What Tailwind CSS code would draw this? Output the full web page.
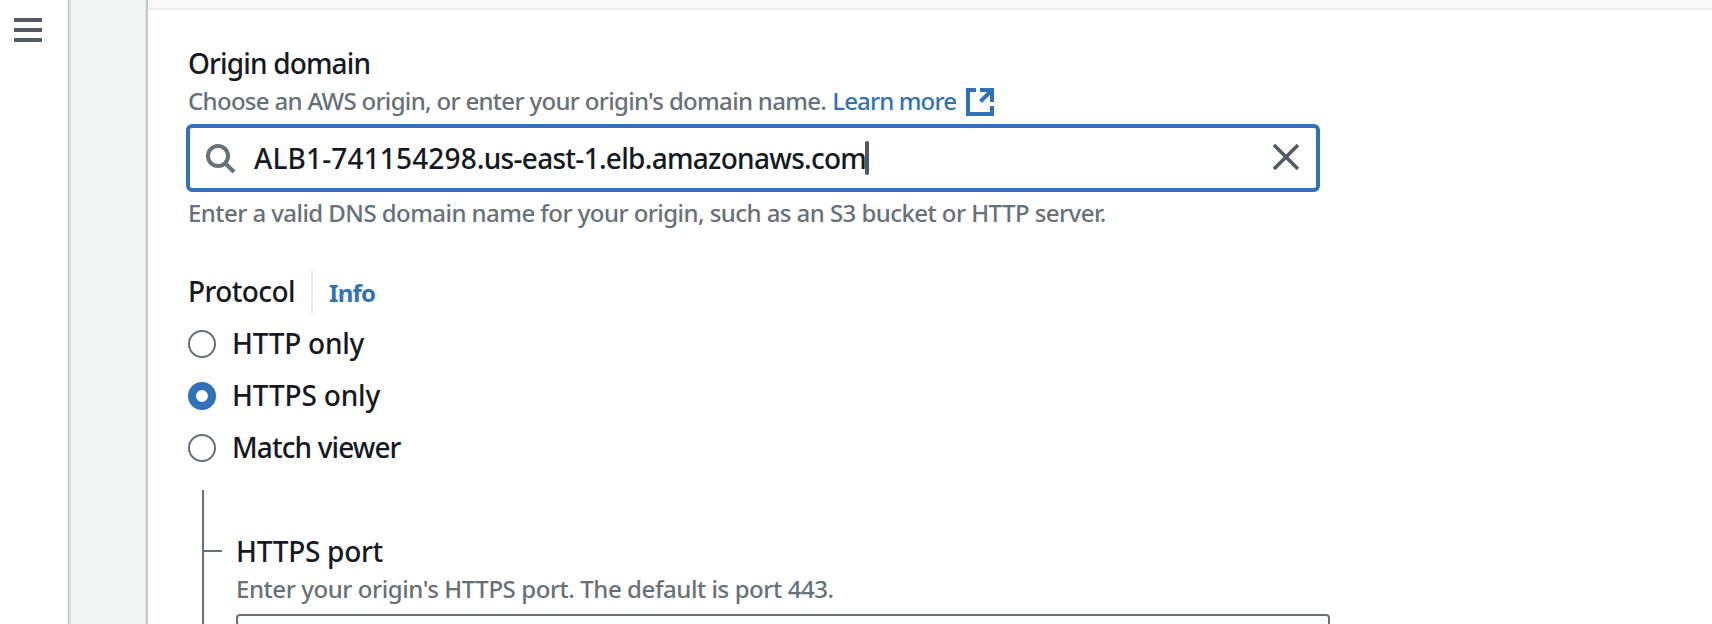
<!DOCTYPE html>
<html lang="en">
<head>
<meta charset="utf-8">
<title>Create origin</title>
<script src="https://cdn.jsdelivr.net/npm/@tailwindcss/browser@4"></script>
</head>
<body class="flex h-[624px] w-[1712px] overflow-hidden bg-white font-['Noto_Sans',sans-serif] font-medium text-[#16191f]">
  <aside class="w-[68px] shrink-0 pt-[18px] pl-[14px]">
    <button class="flex w-7 flex-col gap-1.5" aria-label="Open navigation">
      <span class="h-1 w-7 bg-[#545b64]"></span>
      <span class="h-1 w-7 bg-[#545b64]"></span>
      <span class="h-1 w-7 bg-[#545b64]"></span>
    </button>
  </aside>
  <div class="w-[78px] shrink-0 border-l border-[#b9bdbf] bg-[#f2f4f4]"><div class="h-full border-r border-l-2 border-r-[#e6e9e9] border-l-[#dadddd]"></div></div>
  <main class="flex-1 border-l-2 border-[#c3c8c9]">
    <div class="h-2.5 border-b-2 border-[#eaeded] bg-[#fafafa]"></div>

    <section class="pt-[34px] pl-[38px]">
      <label class="block h-[38px] pl-[2px] text-[28px] leading-[38px] tracking-[-0.85px]">Origin domain</label>
      <div class="flex h-[42px] pl-[2px] text-2xl leading-[38px] whitespace-pre text-[#687078]">
        <span class="tracking-[-0.69px]">Choose an AWS origin, or enter your origin's domain name.</span>
        <a class="ml-[6px] flex tracking-[-0.87px] text-[#2f72b8]">Learn more
          <svg class="mt-1.5 ml-[9.5px] size-7" viewBox="0 0 28 28" fill="none" stroke="#2f72b8" stroke-width="4"><path d="M10 2H2v24h24v-8M14 2h12v12M26 2 14.500 13.500"/></svg></a>
      </div>

      <div class="flex h-[68px] w-[1134px] items-center rounded-[6px] border-4 border-[#2f72b8] pl-4">
        <svg class="mt-0.5 size-[30px]" viewBox="0 0 30 30" fill="none" stroke="#687078" stroke-width="4"><circle cx="12" cy="12" r="10"/><path d="m19 19 9 9"/></svg>
        <span class="ml-[18px] text-[28px] leading-[36px] tracking-[-0.71px]"><span class="tracking-[0.15px]">ALB1-741154298</span>.us-east-1.elb.amazonaws.com</span>
        <span class="-ml-[1px] h-[34px] w-1 rounded-sm bg-[#54575c]"></span>
        <svg class="mr-[16px] mb-0.5 ml-auto size-7" viewBox="0 0 28 28" stroke="#545b64" stroke-width="3.700"><path d="m2 2 24 24M26 2 2 26"/></svg>
      </div>
      <p class="h-[78px] pt-1 pl-[2px] text-2xl leading-[34px] tracking-[-0.56px] text-[#687078]">Enter a valid DNS domain name for your origin, such as an S3 bucket or HTTP server.</p>

      <div class="flex h-11">
        <span class="w-[125px] pl-[2px] text-[28px] leading-[42px] tracking-[-0.6px]">Protocol</span>
        <a class="border-l-2 border-[#eaeded] pl-[16px] text-2xl leading-[45px] font-bold tracking-[-0.7px] text-[#2f72b8]">Info</a>
      </div>

      <div class="flex flex-col gap-4 pt-3 pl-[2px] text-[28px] leading-9">
        <label class="flex h-9 items-center gap-4"><span class="size-7 rounded-full border-2 border-[#687078]"></span><span class="-mt-0.5 tracking-[-0.26px]">HTTP only</span></label>
        <label class="flex h-9 items-center gap-4"><span class="size-7 rounded-full border-8 border-[#2f72b8]"></span><span class="-mt-0.5 tracking-[-0.17px]">HTTPS only</span></label>
        <label class="flex h-9 items-center gap-4"><span class="size-7 rounded-full border-2 border-[#687078]"></span><span class="-mt-0.5 tracking-[-0.9px]">Match viewer</span></label>
      </div>

      <div class="mt-6 ml-4 flex h-[134px] overflow-hidden border-l-2 border-[#687078]">
        <div class="mt-[60px] h-0.5 w-[18px] bg-[#687078]"></div>
        <div class="pt-[42px] pl-[14px]">
          <label class="block h-[38px] text-[28px] leading-[38px] tracking-[-0.28px]">HTTPS port</label>
          <p class="h-11 text-2xl leading-[38px] tracking-[-0.43px] text-[#687078]">Enter your origin's HTTPS port. The default is port 443.</p>
          <div class="h-[68px] w-[1094px] rounded-[4px] border-2 border-[#687078]"></div>
        </div>
      </div>
    </section>
  </main>
</body>
</html>
